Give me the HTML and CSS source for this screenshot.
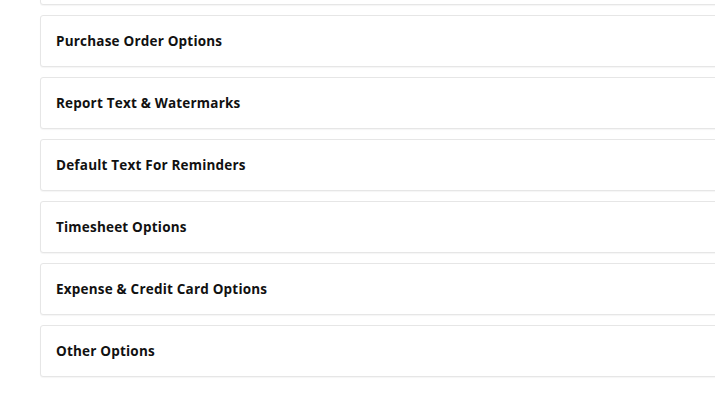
FILE: index.html
```html
<!DOCTYPE html>
<html>
<head>
<meta charset="utf-8">
<link rel="stylesheet" href="styles.css">
</head>
<body>
<div class="list">
  <div class="card"></div>
  <div class="card"><span class="title">Purchase Order Options</span></div>
  <div class="card"><span class="title">Report Text &amp; Watermarks</span></div>
  <div class="card"><span class="title">Default Text For Reminders</span></div>
  <div class="card"><span class="title">Timesheet Options</span></div>
  <div class="card"><span class="title">Expense &amp; Credit Card Options</span></div>
  <div class="card"><span class="title">Other Options</span></div>
</div>
</body>
</html>
```
FILE: styles.css
```css
html, body {
  margin: 0;
  padding: 0;
  background: #ffffff;
  overflow: hidden;
  width: 715px;
  height: 400px;
}
.list {
  display: flex;
  flex-direction: column;
  gap: 10px;
  margin-top: -47px;
  margin-left: 40px;
  width: 700px;
}
.card {
  box-sizing: border-box;
  height: 52px;
  border: 1px solid #e6e6e6;
  border-radius: 3px;
  box-shadow: 0 1px 1px rgba(0,0,0,0.04);
  display: flex;
  align-items: center;
  padding-left: 15px;
  background: #fff;
}
.title {
  font-family: "Open Sans", sans-serif;
  font-weight: 700;
  font-size: 13.5px;
  color: #111111;
  letter-spacing: 0.2px;
}
```
